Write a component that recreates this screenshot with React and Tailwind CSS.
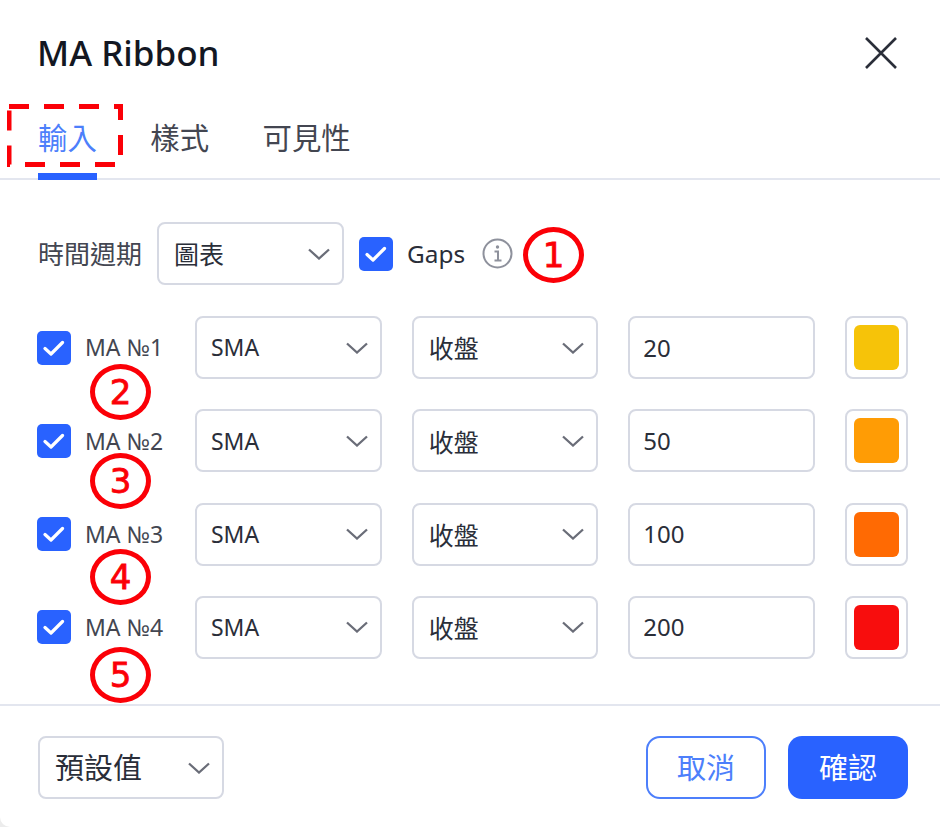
const FONT = "font-['Noto_Sans','Noto_Sans_CJK_TC',sans-serif]";

const rows = [
  { label: 'MA №1', length: '20', color: 'bg-[#f6c309]' },
  { label: 'MA №2', length: '50', color: 'bg-[#ff9c05]' },
  { label: 'MA №3', length: '100', color: 'bg-[#ff6a03]' },
  { label: 'MA №4', length: '200', color: 'bg-[#f80d0d]' },
];

const Select = ({ value, className = '', valueClass = 'text-[25px] pt-[3px]' }) => (
  <div className={`flex h-[63px] items-center justify-between rounded-lg border-2 border-[#d6d9e3] bg-white pl-[15px] pr-[12px] text-[#2a2e39] ${className}`}>
    <span className={valueClass}>{value}</span>
    <svg width="22" height="12" viewBox="0 0 22 12" fill="none" stroke="#6a6d78" strokeWidth="2.3">
      <path d="M1 1.5l10 9 10-9" />
    </svg>
  </div>
);

const Checkbox = () => (
  <div className="flex h-[34px] w-[34px] shrink-0 items-center justify-center rounded-[5px] bg-[#2962ff]">
    <svg width="22" height="22" viewBox="0 0 22 22" fill="none" stroke="white" strokeWidth="3.2" strokeLinecap="round" strokeLinejoin="round">
      <path d="M2 11.5l6 5.5L19.5 5.5" />
    </svg>
  </div>
);

// red numbered marks drawn over the screenshot
const Mark = ({ n, className }) => (
  <div className={`absolute flex h-[56px] w-[61px] items-center justify-center rounded-[50%] border-[5px] border-[#fb0007] font-['DejaVu_Sans',sans-serif] text-[34px] leading-none text-[#fb0007] [-webkit-text-stroke:0.8px_#fb0007] ${className}`}>
    {n}
  </div>
);

export default function App() {
  return (
    <div className="h-[827px] w-[940px] bg-[#ececec]">
      <div className={`relative flex h-[827px] w-[940px] flex-col overflow-hidden rounded-bl-[10px] bg-white text-[#131722] ${FONT}`}>
        {/* Header */}
        <div className="flex h-[106px] shrink-0 items-start justify-between pl-[37px] pr-[43px] pt-[30px]">
          <h1 className="text-[35px] font-medium leading-[46px]">MA Ribbon</h1>
          <svg width="32" height="32" viewBox="0 0 32 32" className="mt-[7px]" fill="none" stroke="#2a2e39" strokeWidth="2.6">
            <path d="M1 1l30 30M31 1L1 31" />
          </svg>
        </div>

        {/* Tabs */}
        <div className="flex h-[74px] shrink-0 gap-[53.5px] border-b-2 border-[#e3e6ef] pl-[38px] text-[29.4px] leading-[64px] text-[#434651]">
          <div className="h-[74px] border-b-[7px] border-[#2962ff] text-[#4d7ffb]">輸入</div>
          <div>樣式</div>
          <div>可見性</div>
        </div>

        {/* Inputs */}
        <div className="flex min-h-0 flex-1 flex-col pl-[37px] pr-[32px] pt-[42px]">
          <div className="flex items-center">
            <span className="ml-px w-[119px] pt-[2px] text-[26px] text-[#434651]">時間週期</span>
            <Select value="圖表" className="w-[187px]" />
            <div className="ml-[15px]"><Checkbox /></div>
            <span className="ml-[14px] pt-[2px] text-[24.4px] text-[#2a2e39]">Gaps</span>
            <svg width="31" height="31" viewBox="0 0 31 31" className="ml-[17px]" fill="none" stroke="#8e919c" strokeWidth="2">
              <circle cx="15.5" cy="15.5" r="14" />
              <path d="M12.5 13.5h3.5v9M12.5 22.5h7" />
              <circle cx="15.5" cy="9" r="1.7" fill="#8e919c" stroke="none" />
            </svg>
          </div>

          <div className="mt-[31px] flex flex-col gap-[30.3px]">
            {rows.map((row) => (
              <div key={row.label} className="flex items-center">
                <Checkbox />
                <span className="ml-[14px] w-[110px] text-[23px] text-[#434651]">{row.label}</span>
                <Select value="SMA" className="w-[186.7px]" valueClass="-ml-px text-[23px]" />
                <Select value="收盤" className="ml-[30px] w-[186.7px]" />
                <div className="ml-[30px] flex h-[63px] w-[186.7px] items-center rounded-lg border-2 border-[#d6d9e3] pl-[13px] text-[24px] text-[#2a2e39]">
                  {row.length}
                </div>
                <div className="ml-[30px] flex h-[63px] w-[63px] items-center justify-center rounded-lg border-2 border-[#d6d9e3]">
                  <div className={`h-[45px] w-[45px] rounded-[6px] ${row.color}`} />
                </div>
              </div>
            ))}
          </div>
        </div>

        {/* Footer */}
        <div className="flex h-[123px] shrink-0 items-start justify-between border-t-2 border-[#e3e6ef] pl-[38px] pr-[32px] pt-[30px]">
          <Select value="預設值" className="w-[186px]" valueClass="text-[29px]" />
          <div className="flex gap-[22px] text-[29px]">
            <button className="h-[63px] w-[120px] rounded-[14px] border-2 border-[#4d7ffb] bg-white text-[#4d7ffb]">取消</button>
            <button className="h-[63px] w-[120px] rounded-[14px] bg-[#2962ff] text-white">確認</button>
          </div>
        </div>

        {/* Annotations */}
        <svg className="absolute left-[7px] top-[104px]" width="116" height="63" viewBox="0 0 116 63" fill="none" stroke="#fb0007" strokeWidth="5" strokeDasharray="20 15">
          <path d="M2 2.5H113.5V60.5H2Z" />
        </svg>
        <Mark n="1" className="left-[523px] top-[227px]" />
        <Mark n="2" className="left-[90px] top-[364px]" />
        <Mark n="3" className="left-[90px] top-[453px]" />
        <Mark n="4" className="left-[90px] top-[549px]" />
        <Mark n="5" className="left-[90px] top-[647px]" />
      </div>
    </div>
  );
}
